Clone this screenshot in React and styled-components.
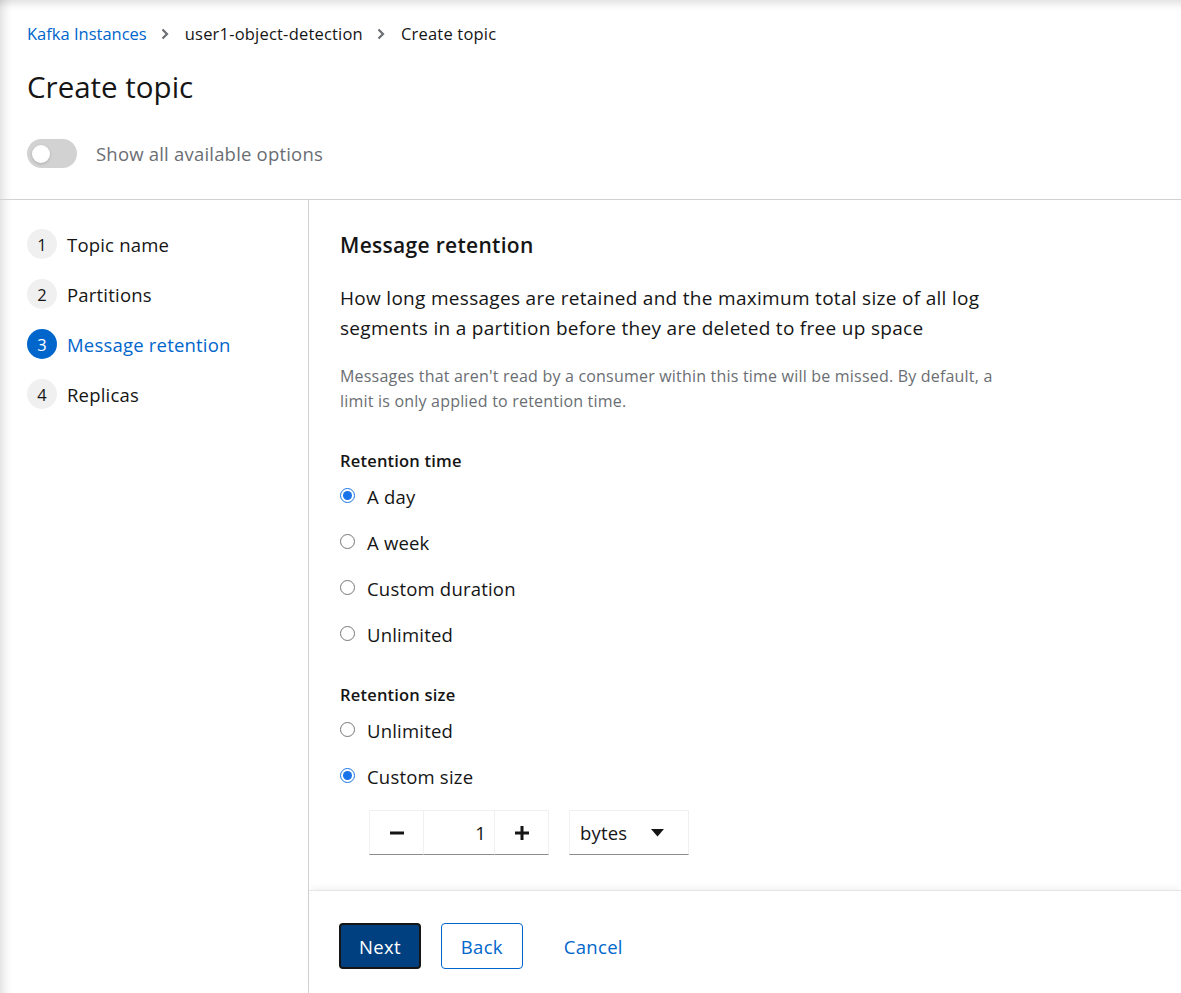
import React, { useState } from "react";
import styled, { createGlobalStyle } from "styled-components";

const GlobalStyle = createGlobalStyle`
  html, body {
    margin: 0;
    padding: 0;
    background: #fff;
  }
  body {
    font-family: "Open Sans", "Liberation Sans", Arial, sans-serif;
    color: #151515;
    letter-spacing: 0.2px;
  }
  * { box-sizing: border-box; }
`;

const Page = styled.div`
  width: 1181px;
  height: 993px;
  display: flex;
  flex-direction: column;
  background: #fff;
  box-shadow: inset 12px 0 10px -8px rgba(0, 0, 0, 0.12),
    inset 0 9px 8px -6px rgba(0, 0, 0, 0.14);
  overflow: hidden;
`;

const Header = styled.div`
  padding: 22px 27px 0 27px;
  border-bottom: 1px solid #d2d2d2;
  height: 200px;
`;

const Breadcrumb = styled.nav`
  display: flex;
  align-items: center;
  font-size: 16.5px;
  line-height: 24px;
  height: 24px;
`;

const Crumb = styled.span`
  color: ${(p) => (p.$link ? "#0066cc" : "#151515")};
  letter-spacing: ${(p) => (p.$link ? "0" : "0.2px")};
`;

const Chevron = styled.span`
  display: inline-flex;
  margin: 0 16px 0 14px;
  color: #6a6e73;
`;

const Title = styled.h1`
  margin: 23px 0 0 0;
  font-size: 29.5px;
  font-weight: 400;
  line-height: 36px;
  letter-spacing: 0;
`;

const ToggleRow = styled.label`
  display: flex;
  align-items: center;
  margin-top: 34px;
  gap: 19px;
`;

const Switch = styled.span`
  width: 50px;
  height: 29px;
  border-radius: 15px;
  background: #d2d2d2;
  position: relative;
  flex: none;

  &::after {
    content: "";
    position: absolute;
    left: 5px;
    top: 5.5px;
    width: 18px;
    height: 18px;
    border-radius: 50%;
    background: #fff;
    box-shadow: 0 1px 3px rgba(0, 0, 0, 0.18);
  }
`;

const ToggleText = styled.span`
  font-size: 18.5px;
  color: #6a6e73;
`;

const Body = styled.div`
  flex: 1;
  display: flex;
`;

const Nav = styled.ol`
  width: 309px;
  flex: none;
  margin: 0;
  padding: 29px 0 0 27px;
  list-style: none;
  border-right: 1px solid #d2d2d2;
`;

const NavItem = styled.li`
  display: flex;
  align-items: center;
  gap: 10px;
  height: 30px;
  margin-bottom: 20px;
  font-size: 18.5px;
  color: ${(p) => (p.$active ? "#0066cc" : "#151515")};
`;

const StepNum = styled.span`
  width: 30px;
  height: 30px;
  border-radius: 50%;
  display: flex;
  align-items: center;
  justify-content: center;
  font-size: 16.5px;
  background: ${(p) => (p.$active ? "#0066cc" : "#f0f0f0")};
  color: ${(p) => (p.$active ? "#fff" : "#151515")};
`;

const Main = styled.div`
  flex: 1;
  display: flex;
  flex-direction: column;
`;

const Content = styled.div`
  flex: 1;
  padding: 32px 31px 0 31px;
`;

const Heading = styled.h2`
  margin: 0;
  font-size: 21px;
  font-weight: 600;
  line-height: 27px;
  letter-spacing: 0.3px;
`;

const Lead = styled.p`
  margin: 24px 0 0 0;
  max-width: 660px;
  font-size: 19px;
  line-height: 30px;
  letter-spacing: 0.3px;
`;

const Helper = styled.p`
  margin: 21px 0 0 0;
  max-width: 665px;
  font-size: 16px;
  line-height: 25px;
  color: #6a6e73;
`;

const GroupLabel = styled.div`
  margin-top: ${(p) => p.$top}px;
  font-size: 16.5px;
  font-weight: 600;
  line-height: 24px;
`;

const RadioList = styled.div`
  display: flex;
  flex-direction: column;
  gap: 19px;
  margin-top: 10px;
`;

const RadioRow = styled.label`
  display: flex;
  align-items: center;
  gap: 12px;
  height: 27px;
  font-size: 18.5px;

  input {
    width: 15px;
    height: 15px;
    margin: 0 0 2px 0;
    accent-color: #1a73e8;
  }
`;

const SizeRow = styled.div`
  display: flex;
  gap: 20px;
  margin: 20px 0 0 29px;
`;

const Stepper = styled.div`
  display: flex;
  height: 45px;
`;

const StepBtn = styled.button`
  width: 55px;
  height: 45px;
  background: #fff;
  border: 1px solid #f0f0f0;
  border-bottom: 1px solid #8a8d90;
  display: flex;
  align-items: center;
  justify-content: center;
  padding: 0;
  color: #151515;
`;

const NumField = styled.div`
  width: 70px;
  height: 45px;
  border-top: 1px solid #f0f0f0;
  border-bottom: 1px solid #8a8d90;
  display: flex;
  align-items: center;
  justify-content: flex-end;
  padding-right: 8px;
  font-size: 18.5px;
`;

const Select = styled.div`
  width: 120px;
  height: 45px;
  border: 1px solid #f0f0f0;
  border-bottom: 1px solid #8a8d90;
  display: flex;
  align-items: center;
  justify-content: space-between;
  padding: 0 24px 0 10px;
  font-size: 18.5px;
`;

const Footer = styled.div`
  height: 103px;
  flex: none;
  border-top: 1px solid #e6e6e6;
  box-shadow: 0 -4px 6px -2px rgba(0, 0, 0, 0.06);
  display: flex;
  align-items: flex-start;
  padding: 32px 0 0 30px;
  gap: 20px;
`;

const Button = styled.button`
  height: 46px;
  padding: 0 ${(p) => (p.$variant === "link" ? "10px" : p.$variant === "secondary" ? "19px" : "18px")};
  border-radius: 4px;
  font-family: inherit;
  font-size: 18.5px;
  letter-spacing: 0.3px;
  cursor: pointer;
  background: ${(p) => (p.$variant === "primary" ? "#004080" : "#fff")};
  color: ${(p) => (p.$variant === "primary" ? "#fff" : "#0066cc")};
  border: ${(p) =>
    p.$variant === "primary"
      ? "2px solid #151515"
      : p.$variant === "secondary"
      ? "1px solid #0066cc"
      : "1px solid transparent"};
  margin-left: ${(p) => (p.$variant === "link" ? "10px" : "0")};
`;

const ChevronIcon = () => (
  <svg width="8" height="12" viewBox="0 0 8 12">
    <path d="M1.5 1.5 L6 6 L1.5 10.5" fill="none" stroke="currentColor" strokeWidth="2.2" />
  </svg>
);

const steps = ["Topic name", "Partitions", "Message retention", "Replicas"];

const App = () => {
  const [time, setTime] = useState("day");
  const [size, setSize] = useState("custom");

  return (
    <Page>
      <GlobalStyle />
      <Header>
        <Breadcrumb>
          <Crumb $link>Kafka Instances</Crumb>
          <Chevron><ChevronIcon /></Chevron>
          <Crumb>user1-object-detection</Crumb>
          <Chevron><ChevronIcon /></Chevron>
          <Crumb>Create topic</Crumb>
        </Breadcrumb>
        <Title>Create topic</Title>
        <ToggleRow>
          <Switch />
          <ToggleText>Show all available options</ToggleText>
        </ToggleRow>
      </Header>
      <Body>
        <Nav>
          {steps.map((s, i) => (
            <NavItem key={s} $active={i === 2}>
              <StepNum $active={i === 2}>{i + 1}</StepNum>
              {s}
            </NavItem>
          ))}
        </Nav>
        <Main>
          <Content>
            <Heading>Message retention</Heading>
            <Lead>
              How long messages are retained and the maximum total size of all log
              segments in a partition before they are deleted to free up space
            </Lead>
            <Helper>
              Messages that aren't read by a consumer within this time will be missed. By
              default, a limit is only applied to retention time.
            </Helper>
            <GroupLabel $top={35}>Retention time</GroupLabel>
            <RadioList>
              {[
                ["day", "A day"],
                ["week", "A week"],
                ["custom", "Custom duration"],
                ["unlimited", "Unlimited"],
              ].map(([v, l]) => (
                <RadioRow key={v}>
                  <input
                    type="radio"
                    name="time"
                    checked={time === v}
                    onChange={() => setTime(v)}
                  />
                  {l}
                </RadioRow>
              ))}
            </RadioList>
            <GroupLabel $top={35}>Retention size</GroupLabel>
            <RadioList>
              {[
                ["unlimited", "Unlimited"],
                ["custom", "Custom size"],
              ].map(([v, l]) => (
                <RadioRow key={v}>
                  <input
                    type="radio"
                    name="size"
                    checked={size === v}
                    onChange={() => setSize(v)}
                  />
                  {l}
                </RadioRow>
              ))}
            </RadioList>
            <SizeRow>
              <Stepper>
                <StepBtn>
                  <svg width="14" height="4" viewBox="0 0 14 4">
                    <rect width="14" height="3" y="0.5" fill="currentColor" />
                  </svg>
                </StepBtn>
                <NumField>1</NumField>
                <StepBtn>
                  <svg width="14" height="14" viewBox="0 0 14 14">
                    <rect width="14" height="3" y="5.5" fill="currentColor" />
                    <rect width="3" height="14" x="5.5" fill="currentColor" />
                  </svg>
                </StepBtn>
              </Stepper>
              <Select>
                <span>bytes</span>
                <svg width="13" height="8" viewBox="0 0 13 8">
                  <path d="M0 0 H13 L6.5 7.5 Z" fill="#151515" />
                </svg>
              </Select>
            </SizeRow>
          </Content>
          <Footer>
            <Button $variant="primary">Next</Button>
            <Button $variant="secondary">Back</Button>
            <Button $variant="link">Cancel</Button>
          </Footer>
        </Main>
      </Body>
    </Page>
  );
};

export default App;
